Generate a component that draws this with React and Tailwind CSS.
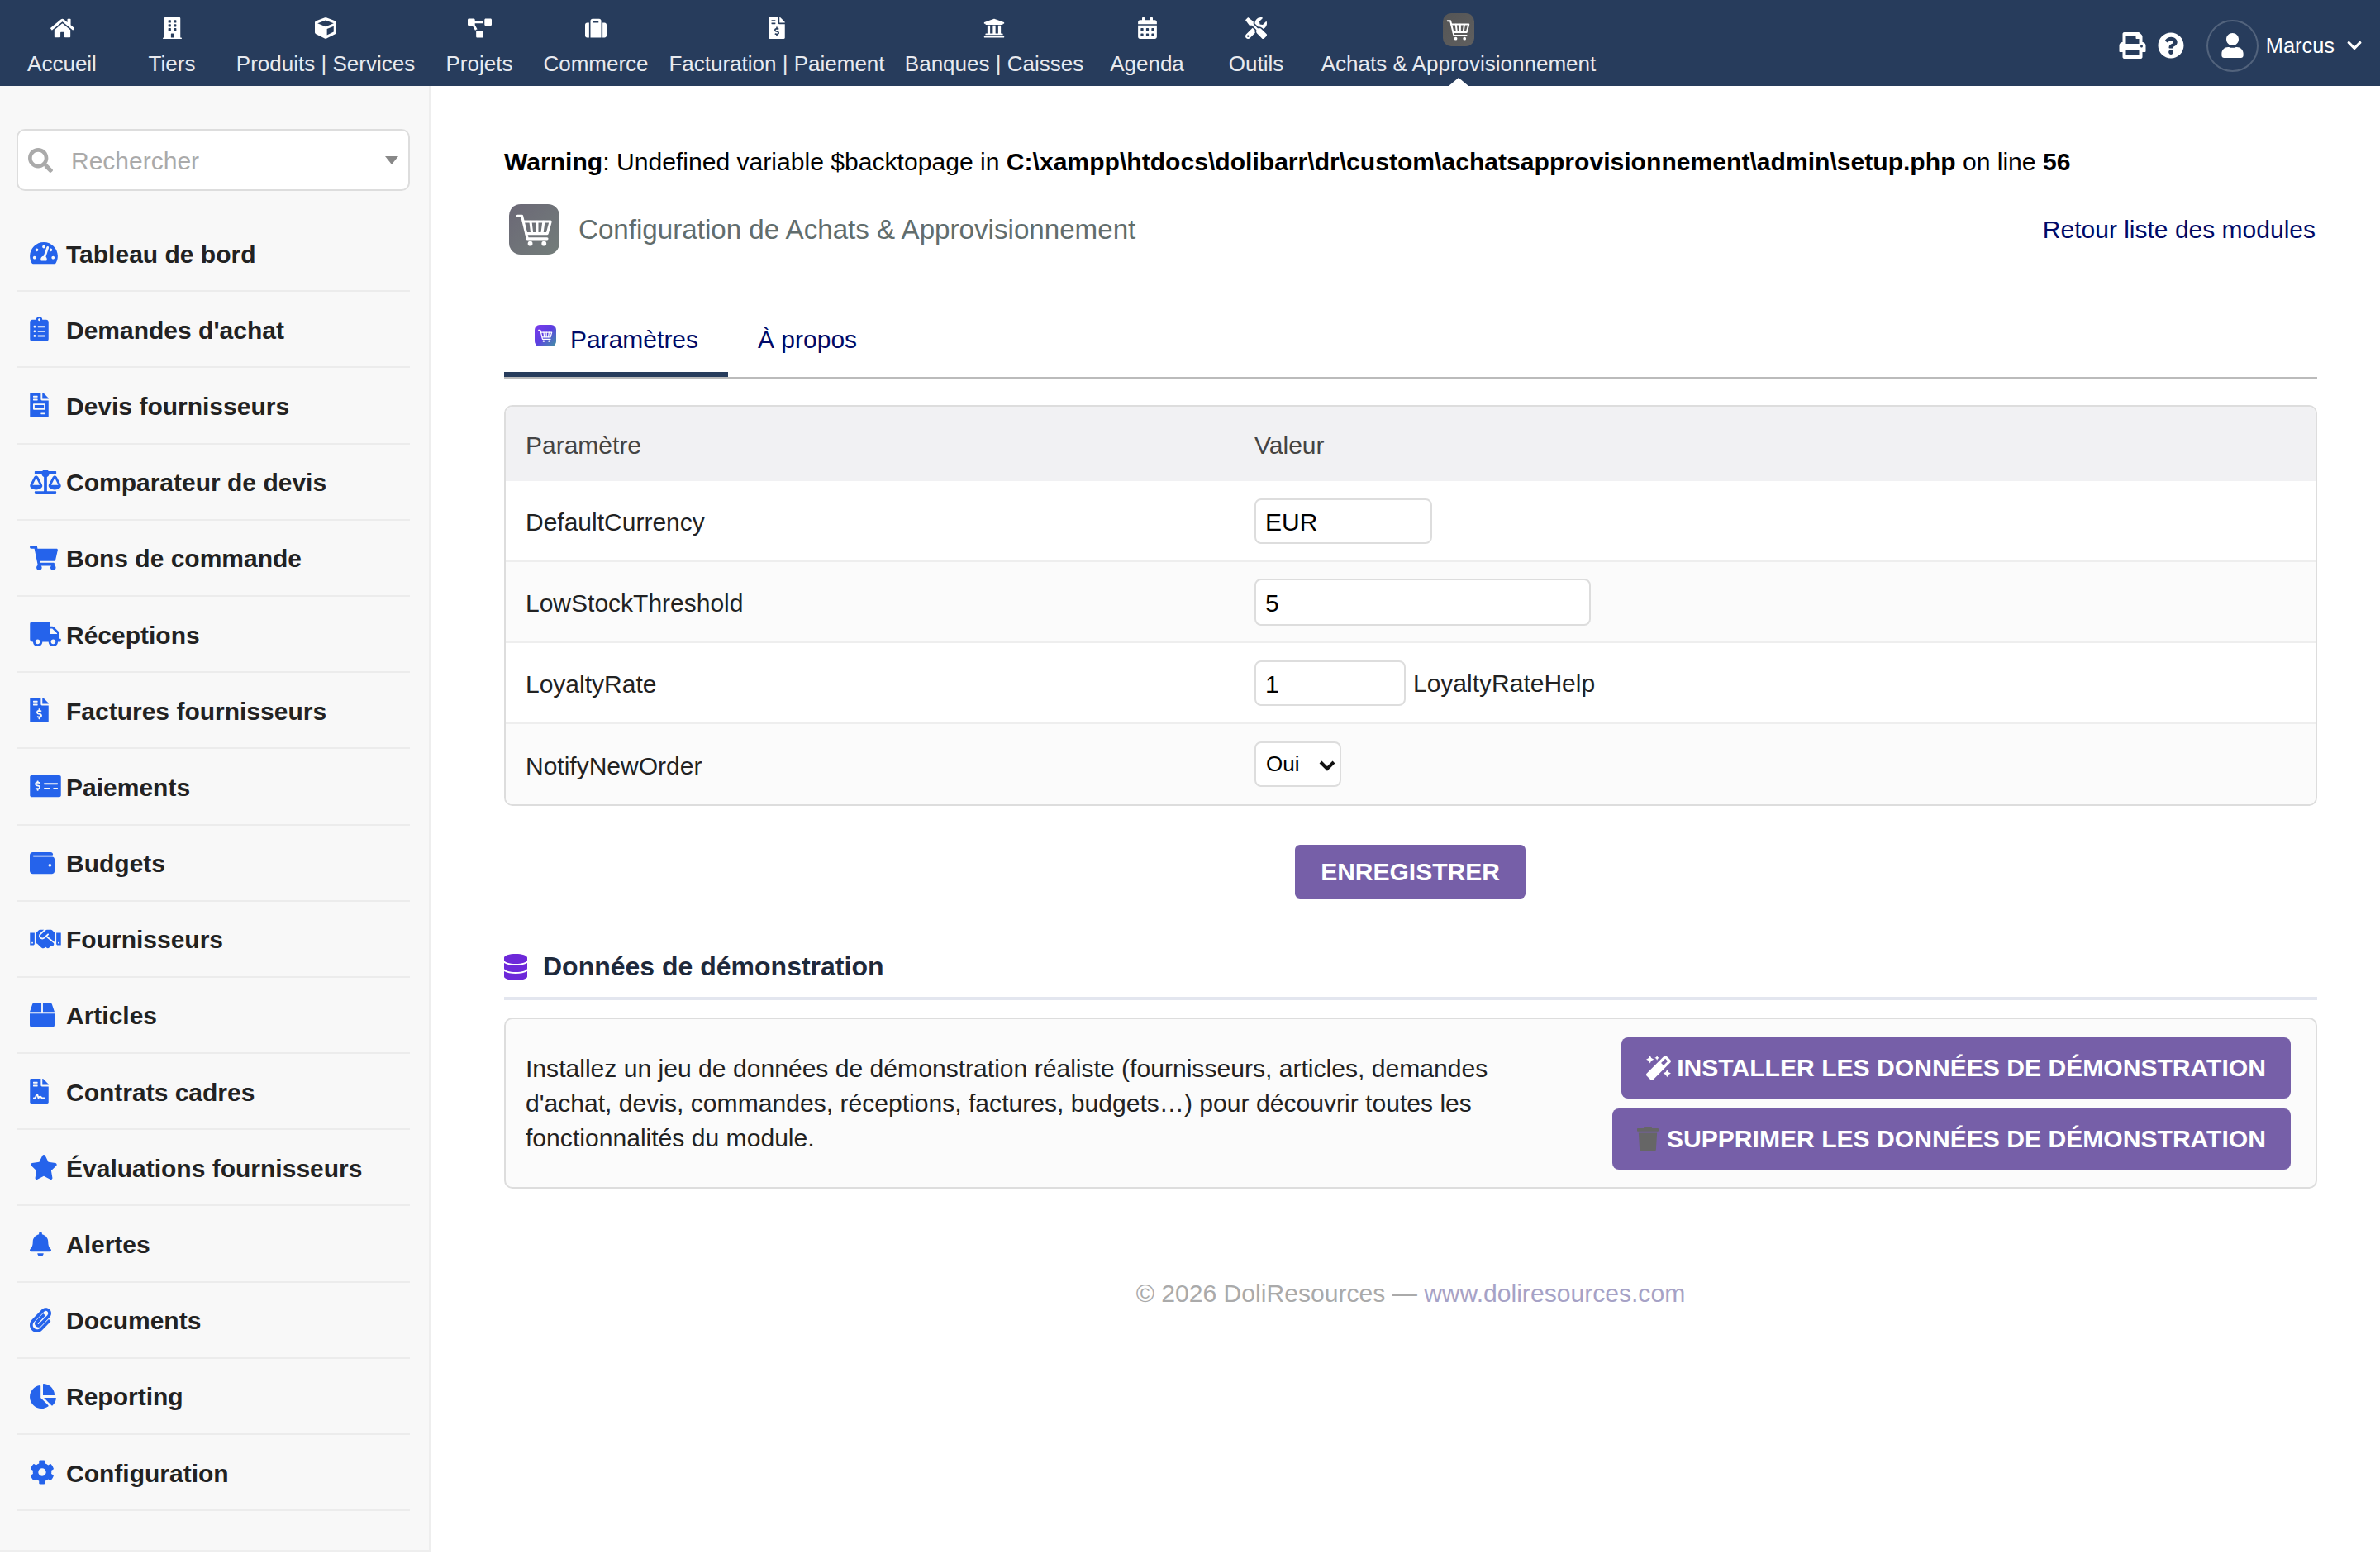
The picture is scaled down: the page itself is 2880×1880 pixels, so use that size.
import {
  FaHome, FaBuilding, FaCube, FaProjectDiagram, FaSuitcase, FaFileInvoiceDollar, FaUniversity,
  FaCalendarAlt, FaTools, FaPrint, FaQuestionCircle, FaUser, FaChevronDown, FaSearch,
  FaTachometerAlt, FaClipboardList, FaFileInvoice, FaBalanceScale, FaShoppingCart, FaTruck,
  FaMoneyCheckAlt, FaWallet, FaHandshake, FaBox, FaFileContract, FaStar, FaBell, FaPaperclip,
  FaChartPie, FaCog, FaDatabase, FaMagic, FaTrash,
} from 'react-icons/fa';

const menuHaut = [
  { label: 'Accueil', icon: FaHome, w: 'w-[150px]', iw: 'w-[29px]' },
  { label: 'Tiers', icon: FaBuilding, w: 'w-[116px]', iw: 'w-[23px]' },
  { label: 'Produits | Services', icon: FaCube, w: 'w-[256px]', iw: 'w-[26px]' },
  { label: 'Projets', icon: FaProjectDiagram, w: 'w-[116px]', iw: 'w-[29px]' },
  { label: 'Commerce', icon: FaSuitcase, w: 'w-[166px]', iw: 'w-[26px]' },
  { label: 'Facturation | Paiement', icon: FaFileInvoiceDollar, w: 'w-[272px]', iw: 'w-[20px]' },
  { label: 'Banques | Caisses', icon: FaUniversity, w: 'w-[254px]', iw: 'w-[26px]' },
  { label: 'Agenda', icon: FaCalendarAlt, w: 'w-[116px]', iw: 'w-[23px]' },
  { label: 'Outils', icon: FaTools, w: 'w-[148px]', iw: 'w-[26px]' },
];

const menuLateral = [
  { label: 'Tableau de bord', icon: FaTachometerAlt, iw: 'w-[34px]' },
  { label: "Demandes d'achat", icon: FaClipboardList, iw: 'w-[23px]' },
  { label: 'Devis fournisseurs', icon: FaFileInvoice, iw: 'w-[23px]' },
  { label: 'Comparateur de devis', icon: FaBalanceScale, iw: 'w-[38px]' },
  { label: 'Bons de commande', icon: FaShoppingCart, iw: 'w-[34px]' },
  { label: 'Réceptions', icon: FaTruck, iw: 'w-[38px]' },
  { label: 'Factures fournisseurs', icon: FaFileInvoiceDollar, iw: 'w-[23px]' },
  { label: 'Paiements', icon: FaMoneyCheckAlt, iw: 'w-[38px]' },
  { label: 'Budgets', icon: FaWallet, iw: 'w-[30px]' },
  { label: 'Fournisseurs', icon: FaHandshake, iw: 'w-[38px]' },
  { label: 'Articles', icon: FaBox, iw: 'w-[30px]' },
  { label: 'Contrats cadres', icon: FaFileContract, iw: 'w-[23px]' },
  { label: 'Évaluations fournisseurs', icon: FaStar, iw: 'w-[34px]' },
  { label: 'Alertes', icon: FaBell, iw: 'w-[26px]' },
  { label: 'Documents', icon: FaPaperclip, iw: 'w-[26px]' },
  { label: 'Reporting', icon: FaChartPie, iw: 'w-[32px]' },
  { label: 'Configuration', icon: FaCog, iw: 'w-[30px]' },
];

// Logo du module : caddie au trait blanc
function CartLogo({ className }) {
  return (
    <svg viewBox="0 0 24 24" className={className} fill="none" stroke="#fff" strokeWidth="1.5" strokeLinecap="round" strokeLinejoin="round">
      <path d="M2 4h2.6l3.2 13.2h11.4" />
      <path d="M5.4 7.2h15.8l-1.9 7H7.2" />
      <path d="M9.6 7.4l.8 6.6M13.4 7.4v6.6M17.2 7.4l-.9 6.6" />
      <circle cx="9.4" cy="20" r="1.4" fill="#fff" stroke="none" />
      <circle cx="17.4" cy="20" r="1.4" fill="#fff" stroke="none" />
    </svg>
  );
}

function TopBar() {
  return (
    <header className="h-[104px] bg-[#273c5c] flex items-start justify-between text-[#e8eaef]">
      <nav className="flex">
        {menuHaut.map(({ label, icon: Icon, w, iw }) => (
          <div key={label} className={`${w} h-[104px] flex flex-col items-center`}>
            <Icon className={`h-[26px] ${iw} text-white mt-[21px]`} />
            <span className="text-[26px] leading-[30px] mt-[15px] whitespace-nowrap">{label}</span>
          </div>
        ))}
        <div className="relative w-[342px] h-[104px] flex flex-col items-center">
          <div className="mt-[16px] w-[38px] h-[40px] rounded-[10px] bg-gradient-to-br from-[#555] to-[#5f5f5f] flex items-center justify-center">
            <CartLogo className="w-[32px] h-[32px]" />
          </div>
          <span className="text-[26px] leading-[30px] mt-[6px] whitespace-nowrap">Achats &amp; Approvisionnement</span>
          <div className="absolute bottom-0 left-1/2 -translate-x-1/2 w-0 h-0 border-x-[12px] border-x-transparent border-b-[10px] border-b-white" />
        </div>
      </nav>
      <div className="flex items-center h-[104px] pr-[21px] pt-[6px]">
        <FaPrint className="h-[32px] w-[33px] text-white" />
        <FaQuestionCircle className="h-[32px] w-[32px] text-white ml-[14px]" />
        <div className="w-[63px] h-[63px] ml-[27px] rounded-full border-2 border-white/20 flex items-center justify-center">
          <FaUser className="h-[30px] w-[27px] text-white" />
        </div>
        <span className="text-[25.4px] text-white ml-[9px]">Marcus</span>
        <FaChevronDown className="h-[20px] w-[20px] text-white ml-[14px]" />
      </div>
    </header>
  );
}

function Sidebar() {
  return (
    <aside className="w-[521px] h-[1773px] shrink-0 bg-[#f8f8f8] border-r-2 border-b-2 border-[#eeeeee] px-[20px] pt-[52px]">
      <div className="h-[75px] w-[476px] bg-white border-2 border-[#dddddd] rounded-[10px] flex items-center pl-[12px] pr-[12px]">
        <FaSearch className="h-[30px] w-[30px] text-[#aaaaaa]" />
        <span className="text-[30px] text-[#aaaaaa] ml-[22px] flex-1 pt-[2px]">Rechercher</span>
        <div className="w-0 h-0 border-x-[8px] border-x-transparent border-t-[10px] border-t-[#888888]" />
      </div>
      <div className="mt-[30px] w-[476px]">
        {menuLateral.map(({ label, icon: Icon, iw }) => (
          <div key={label} className="h-[92.2px] flex items-center border-b-2 border-[#ececec] pl-[16px]">
            <span className="w-[44px] shrink-0"><Icon className={`h-[30px] ${iw} text-[#2563eb]`} /></span>
            <span className="text-[30px] font-bold text-[#222222] whitespace-nowrap pt-[2px]">{label}</span>
          </div>
        ))}
      </div>
    </aside>
  );
}

function ConfigRow({ label, pair, last, children }) {
  return (
    <div className={`${last ? 'h-[97px]' : 'h-[98px] border-b-2 border-[#eeeeee]'} flex items-center ${pair ? 'bg-[#fbfbfb]' : 'bg-white'}`}>
      <div className="w-[906px] pl-[24px] pt-[3px] text-[#222222]">{label}</div>
      <div className="flex items-center">{children}</div>
    </div>
  );
}

const inputCls = 'bg-white border-2 border-[#dddddd] rounded-[8px] pl-[11px] pr-[12px] pt-[3px] text-[30px] text-black outline-none';

function Main() {
  return (
    <main className="flex-1 pl-[89px] pr-[76px] pt-[71px] text-[30px] text-black">
      <p className="h-[42px] leading-[42px] whitespace-nowrap text-[30.1px]">
        <b>Warning</b>: Undefined variable $backtopage in <b>C:\xampp\htdocs\dolibarr\dr\custom\achatsapprovisionnement\admin\setup.php</b> on line <b>56</b>
      </p>

      {/* Titre */}
      <div className="mt-[30px] h-[61px] flex items-center justify-between">
        <div className="flex items-center pl-[6px]">
          <div className="w-[61px] h-[61px] rounded-[14px] bg-gradient-to-br from-[#6b6876] to-[#737d7a] flex items-center justify-center">
            <CartLogo className="w-[50px] h-[50px]" />
          </div>
          <span className="ml-[23px] text-[33.15px] text-[#616d6d] whitespace-nowrap">Configuration de Achats &amp; Approvisionnement</span>
        </div>
        <a className="text-[30px] text-[#000a68] mr-[2px]">Retour liste des modules</a>
      </div>

      {/* Onglets */}
      <div className="mt-[55px] h-[95px] flex border-b-2 border-[#bbbbbb]">
        <div className="w-[271px] h-[93px] mb-[-1px] border-b-[6px] border-[#273c5c] flex items-center pl-[37px] text-[#000a68]">
          <div className="w-[26px] h-[26px] rounded-[6px] bg-gradient-to-br from-[#7c3aed] via-[#5b3fe0] to-[#3f8f9f] flex items-center justify-center mb-[2px]">
            <CartLogo className="w-[20px] h-[20px]" />
          </div>
          <span className="ml-[17px] pt-[7px]">Paramètres</span>
        </div>
        <div className="h-[93px] flex items-center ml-[36px] pt-[1px] text-[#000a68]">À propos</div>
      </div>

      {/* Tableau des paramètres */}
      <div className="mt-[32px] border-2 border-[#dddddd] rounded-[10px] overflow-hidden">
        <div className="h-[90px] bg-[#f1f1f3] flex items-center text-[#444444] pt-[2px]">
          <div className="w-[906px] pl-[24px]">Paramètre</div>
          <div>Valeur</div>
        </div>
        <ConfigRow label="DefaultCurrency">
          <input className={`${inputCls} w-[215px] h-[55px]`} defaultValue="EUR" />
        </ConfigRow>
        <ConfigRow label="LowStockThreshold" pair>
          <input className={`${inputCls} w-[407px] h-[57px]`} defaultValue="5" />
        </ConfigRow>
        <ConfigRow label="LoyaltyRate">
          <input className={`${inputCls} w-[183px] h-[55px]`} defaultValue="1" />
          <span className="ml-[9px] text-[#222222]">LoyaltyRateHelp</span>
        </ConfigRow>
        <ConfigRow label="NotifyNewOrder" pair last>
          <div className="relative">
            <select className="appearance-none block w-[105px] h-[55px] bg-white border-2 border-[#dddddd] rounded-[8px] pl-[12px] text-[26px] text-black outline-none" defaultValue="Oui">
              <option>Oui</option>
              <option>Non</option>
            </select>
            <svg viewBox="0 0 20 14" className="absolute left-[78px] top-[22px] w-[20px] h-[14px] pointer-events-none" fill="none" stroke="#111" strokeWidth="4">
              <path d="M2 3l8 8 8-8" />
            </svg>
          </div>
        </ConfigRow>
      </div>

      <div className="mt-[47px] flex justify-center pr-[1px]">
        <button className="w-[279px] h-[65px] rounded-[6px] bg-[#765fa8] text-white font-bold text-[30px]">ENREGISTRER</button>
      </div>

      {/* Données de démonstration */}
      <div className="mt-[64px] h-[59px] flex items-start border-b-[4px] border-[#e3e6ef]">
        <FaDatabase className="h-[32px] w-[28px] text-[#6d28d9] mt-[3px]" />
        <span className="ml-[19px] mt-[-1px] font-bold text-[#1e293b] text-[32px] leading-[38px]">Données de démonstration</span>
      </div>
      <div className="mt-[21px] h-[207px] border-2 border-[#dddddd] rounded-[10px] bg-[#fbfbfb] flex items-center justify-between pl-[24px] pr-[30px]">
        <p className="w-[1190px] leading-[42px] text-[#222222] text-[30.1px] pt-[1px]">
          Installez un jeu de données de démonstration réaliste (fournisseurs, articles, demandes d'achat, devis, commandes, réceptions, factures, budgets…) pour découvrir toutes les fonctionnalités du module.
        </p>
        <div className="flex flex-col items-end gap-[12px]">
          <button className="h-[74px] px-[30px] rounded-[8px] bg-[#765fa8] text-white font-bold text-[30.1px] flex items-center whitespace-nowrap">
            <FaMagic className="h-[30px] w-[30px] mr-[7px]" />INSTALLER LES DONNÉES DE DÉMONSTRATION
          </button>
          <button className="h-[74px] px-[30px] rounded-[8px] bg-[#765fa8] text-white font-bold text-[30.1px] flex items-center whitespace-nowrap">
            <FaTrash className="h-[30px] w-[26px] text-[#666666] mr-[10px]" />SUPPRIMER LES DONNÉES DE DÉMONSTRATION
          </button>
        </div>
      </div>

      <p className="mt-[106px] text-center text-[30.1px] text-[#aaaaaa] leading-[42px]">
        © 2026 DoliResources — <span className="text-[#a6a2c6]">www.doliresources.com</span>
      </p>
    </main>
  );
}

export default function App() {
  return (
    <div className="w-[2880px] h-[1880px] bg-white overflow-hidden font-['Liberation_Sans',Arial,sans-serif]">
      <TopBar />
      <div className="flex">
        <Sidebar />
        <Main />
      </div>
    </div>
  );
}
